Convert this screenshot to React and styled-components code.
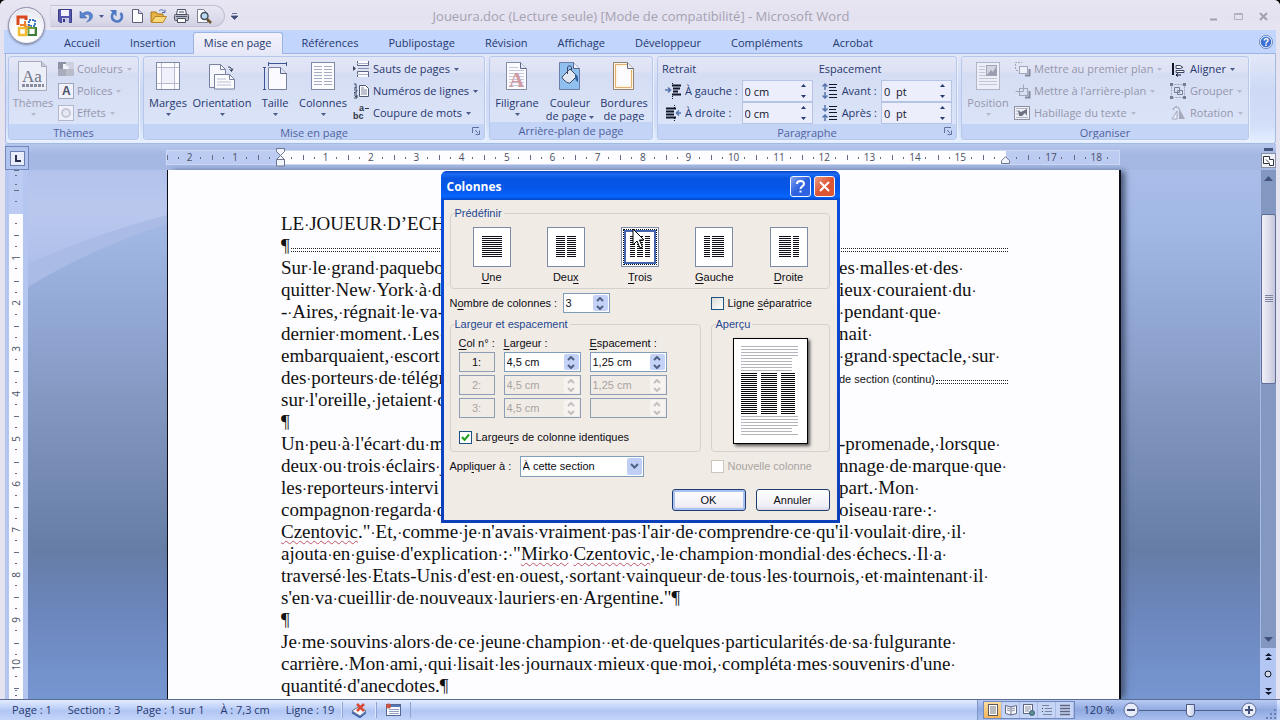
import React, { useState } from "react";
import styled, { createGlobalStyle, css } from "styled-components";

const ui = `"Open Sans", "Noto Sans", sans-serif`;
const dialogFont = `Tahoma, "Liberation Sans", sans-serif`;

const colors = {
  frame: "#e6e3f1",
  text: "#26386f",
  disabled: "#9596ab",
  field: "#7f9db9",
};

const TABS = [
  "Accueil", "Insertion", "Mise en page", "Références", "Publipostage",
  "Révision", "Affichage", "Développeur", "Compléments", "Acrobat",
];

// numbers of the horizontal ruler, -2 to 18 cm around the left margin
const H_CELLS = Array.from({ length: 21 }, (_, i) => i - 2);
const V_CELLS = Array.from({ length: 11 }, (_, i) => i);

// "·" is a space mark, _word_ is a misspelt word
const LINES = [
  { left: "LE·JOUEUR·D’ECH" },
  { left: "¶", fill: true },
  { left: "Sur·le·grand·paquebo", right: "es·malles·et·des·" },
  { left: "quitter·New·York·à·d", right: "ieux·couraient·du·" },
  { left: "-·Aires,·régnait·le·va-", right: "·pendant·que·" },
  { left: "dernier·moment.·Les·", right: "nait·" },
  { left: "embarquaient,·escort", right: "·grand·spectacle,·sur·" },
  { left: "des·porteurs·de·télégr", section: "de section (continu)" },
  { left: "sur·l'oreille,·jetaient·d" },
  { left: "¶" },
  { left: "Un·peu·à·l'écart·du·m", right: "-promenade,·lorsque·" },
  { left: "deux·ou·trois·éclairs·j", right: "nnage·de·marque·que·" },
  { left: "les·reporteurs·intervi", right: "part.·Mon·" },
  { left: "compagnon·regarda·d", right: "oiseau·rare·:·" },
  { left: "_Czentovic_.\"·Et,·comme·je·n'avais·vraiment·pas·l'air·de·comprendre·ce·qu'il·voulait·dire,·il·" },
  { left: "ajouta·en·guise·d'explication·:·\"_Mirko_·_Czentovic_,·le·champion·mondial·des·échecs.·Il·a·" },
  { left: "traversé·les·Etats-Unis·d'est·en·ouest,·sortant·vainqueur·de·tous·les·tournois,·et·maintenant·il·" },
  { left: "s'en·va·cueillir·de·nouveaux·lauriers·en·Argentine.\"¶" },
  { left: "¶" },
  { left: "Je·me·souvins·alors·de·ce·jeune·champion··et·de·quelques·particularités·de·sa·fulgurante·" },
  { left: "carrière.·Mon·ami,·qui·lisait·les·journaux·mieux·que·moi,·compléta·mes·souvenirs·d'une·" },
  { left: "quantité·d'anecdotes.¶" },
];

const PRESETS = [
  { id: "une", label: <><u>U</u>ne</>, cols: [[0, 20]] },
  { id: "deux", label: <>Deu<u>x</u></>, cols: [[0, 9], [11, 9]] },
  { id: "trois", label: <><u>T</u>rois</>, cols: [[0, 5], [7, 6], [15, 5]] },
  { id: "gauche", label: <><u>G</u>auche</>, cols: [[0, 6], [8, 12]] },
  { id: "droite", label: <><u>D</u>roite</>, cols: [[0, 12], [14, 6]] },
];

const Marked = ({ text }) => (
  <span>
    {text.split(/(·|_[^_]+_)/).map((part, i) => {
      if (part === "·") return <SpaceMark key={i}>·</SpaceMark>;
      if (part.startsWith("_")) return <Misspelt key={i}>{part.slice(1, -1)}</Misspelt>;
      return part;
    })}
  </span>
);

// ── Icons ──

const Svg = ({ w = 16, h = w, children, ...rest }) => (
  <svg width={w} height={h} viewBox={`0 0 ${w} ${h}`} fill="none" aria-hidden="true" {...rest}>
    {children}
  </svg>
);

const Caret = ({ color = "#4a5a8c" }) => (
  <Svg w={5} h={3}><path d="M0 0h5L2.500 3z" fill={color} /></Svg>
);

const UpDown = ({ up, color = "#26386f" }) => (
  <Svg w={7} h={4}><path d={up ? "M3.500 0L6 3H1z" : "M1 1h5L3.500 4z"} fill={color} /></Svg>
);

const Chevron = ({ up, color = "#4d6185" }) => (
  <Svg w={8} h={5}><path d={up ? "M1 4l3-3 3 3" : "M1 1l3 3 3-3"} stroke={color} strokeWidth="2" /></Svg>
);

const OfficeLogo = () => (
  <Svg w={24} h={24}>
    <path d="M3 11V3h8v3" stroke="#d9481c" strokeWidth="3" />
    <path d="M5 11h5V7" stroke="#ee8130" strokeWidth="2" />
    <rect x="14" y="6" width="6" height="6" stroke="#3d76c4" strokeWidth="2" strokeDasharray="2 1" />
    <rect x="4" y="14" width="7" height="7" stroke="#f2bd33" strokeWidth="2.500" />
    <rect x="13.500" y="14" width="7" height="7" stroke="#6f9f3f" strokeWidth="2" />
    <path d="M21 13v8h-8" stroke="#3f7d3a" strokeWidth="2" />
    <path d="M9 12.500h7M12 10v6" stroke="#e89a3a" strokeWidth="1" />
  </Svg>
);

const SaveIcon = () => (
  <Svg><path d="M1.500 1.500h13v13H3l-1.500-1.500z" fill="#5457ab" stroke="#3c3d88" />
    <path d="M4 2h8v6H4z" fill="#f3f3fb" /><path d="M5 10h7v5H5z" fill="#c9cbe4" /><path d="M6 11h2v3H6z" fill="#34357e" /></Svg>
);
const UndoIcon = () => (
  <Svg w={14}><path d="M1 2v7h7L5.500 6.500C8 4.500 10.500 5 10.500 8c0 2-1 3.500-3 5C11.500 12 13.500 10 13.500 7c0-4.500-6-5.500-10-2.500z" fill="#5b84cf" stroke="#446db0" strokeWidth=".6" /></Svg>
);
const RedoIcon = () => (
  <Svg w={14}><path d="M4 3.500A5 5 0 1 0 10.500 4" stroke="#5079c4" strokeWidth="2.600" /><path d="M0 1h6.500v6.500z" fill="#5079c4" /></Svg>
);
const NewIcon = () => (
  <Svg w={14} h={16}><path d="M2.500 1.500h6l4 4v9h-10z" fill="#fdfdff" stroke="#5b6078" /><path d="M8.500 1.500v4h4" fill="#cfd5e8" stroke="#5b6078" /></Svg>
);
const OpenIcon = () => (
  <Svg w={17} h={16}><path d="M1 4h5l1.500 2H13v3H5l-3 5H1z" fill="#e8b345" stroke="#a8741c" />
    <path d="M5 8.500h11.500L13 14.500H1.500z" fill="#fbd97a" stroke="#b9852a" /><path d="M9 3c2-2 4-1.500 5 .5m1-2v3h-3" stroke="#4b6db0" /></Svg>
);
const PrintIcon = () => (
  <Svg w={17} h={16}><path d="M4.500 1.500h8l1 5h-10z" fill="#f4f5fb" stroke="#4d5060" /><rect x="1.500" y="6.500" width="14" height="6" rx="1" fill="#b6bac8" stroke="#4d5060" />
    <path d="M4.500 10.500h8v4h-8z" fill="#fff" stroke="#4d5060" /><path d="M6 4h5M3 8.500h11" stroke="#4d5060" /></Svg>
);
const PreviewIcon = () => (
  <Svg w={16}><path d="M1.500 1.500h6l4 4v9h-10z" fill="#fdfdff" stroke="#7d8297" /><circle cx="8.500" cy="8" r="3.500" fill="#b9dcf0" stroke="#49505f" strokeWidth="1.500" /><path d="M11 11l4 4" stroke="#6b5330" strokeWidth="2.500" /></Svg>
);

const ThemesIcon = () => (
  <Svg w={32} h={32}><path d="M1.500 1.500h23l5 5v24h-28z" fill="#eceef8" stroke="#a6a9b9" /><path d="M24.500 1.500v5h5" fill="#c8cad8" stroke="#a6a9b9" />
    <text x="5" y="22" fontSize="17" fontFamily="Liberation Serif, serif" fill="#6f7487">Aa</text>
    <path d="M5 25.500h22" stroke="#888ca0" strokeWidth="3" strokeDasharray="3 1" /></Svg>
);
const ColorsIcon = () => (
  <Svg><path d="M0 1h8v7H0z" fill="#8e92a5" /><path d="M5 3h5v5H5z" fill="#f2f3fb" /><path d="M8 1h8v7h-5V5H8z" fill="#cdd0df" /><path d="M0 8h16v7H0z" fill="#a9adbe" /><path d="M8 8h8v7H8z" fill="#b9bccb" /></Svg>
);
const FontsIcon = () => (
  <Svg><rect x=".5" y=".5" width="15" height="15" fill="#f0f1fa" stroke="#a2a6ba" /><text x="4" y="12" fontSize="12" fontWeight="bold" fontFamily="Liberation Sans, sans-serif" fill="#4c5167">A</text></Svg>
);
const EffectsIcon = () => (
  <Svg><rect x=".5" y=".5" width="15" height="15" fill="#f0f1fa" stroke="#b3b7ca" /><circle cx="8" cy="8" r="4" fill="#e6e8f4" stroke="#c5c8d7" strokeWidth="2" /></Svg>
);
const MarginsIcon = () => (
  <Svg w={26} h={30}><rect x="1.500" y="1.500" width="23" height="27" fill="#fcfcff" stroke="#8089a8" /><path d="M6.500 2v26M19.500 2v26M2 6.500h22M2 22.500h22" stroke="#b4bad0" /><path d="M7 7h12v15H7z" fill="#eff0fa" /></Svg>
);
const OrientationIcon = () => (
  <Svg w={30} h={30}><path d="M2.500 3.500h11l5 5v18h-16z" fill="#f6f6fd" stroke="#7881a0" /><path d="M13.500 3.500v5h5" stroke="#7881a0" />
    <path d="M7.500 13.500h15l5 5v9.500h-20z" fill="#fcfcff" stroke="#7881a0" /><path d="M22.500 13.500v5h5" stroke="#7881a0" />
    <path d="M10 18h9M10 21h14M10 24h14" stroke="#b7bed5" /><path d="M21 6c3-.5 4 2 3.500 4m-2-2l2 2.500 1.500-3" stroke="#35435f" /></Svg>
);
const SizeIcon = () => (
  <Svg w={26} h={30}><path d="M6.500 6.500h12l6 6v16h-18z" fill="#fbfbff" stroke="#7881a0" /><path d="M18.500 6.500v6h6" fill="#dfe3f2" stroke="#5c6684" />
    <path d="M6 2.500h19M6.500 1v4M24.500 1v4M2.500 6v23M1 6.500h3M1 28.500h3" stroke="#3e5694" /></Svg>
);
const ColumnsIcon = () => (
  <Svg w={26} h={30}><rect x="1.500" y="1.500" width="23" height="27" fill="#fcfcff" stroke="#8089a8" />
    {[5, 8, 11, 14, 17, 20, 23].map((y) => <path key={y} d={`M4 ${y}.500h8M14 ${y}.500h8`} stroke="#a4acc6" />)}</Svg>
);
const BreaksIcon = () => (
  <Svg w={17} h={16}><path d="M4.500 0v4.500h11V0M4.500 16v-5.500h11V16" fill="#fafaff" stroke="#5c6684" /><path d="M4 2.500h11M4 13.500h11" stroke="#aab1c8" /><path d="M5 7.500h11" stroke="#8791af" /><path d="M0 5l3 2.500L0 10z" fill="#35435f" /></Svg>
);
const LineNumIcon = () => (
  <Svg w={17} h={16}><path d="M6.500 2.500h6l3 3v8h-9z" fill="#fdfdff" stroke="#4d5670" /><path d="M8 7h6M8 9h6M8 11h6M8 5h3" stroke="#7e869d" />
    <path d="M1 1h2v4M1 5h3M1 7h3v1L1 10h3M1 12h3v3H1M2 13.500h2" stroke="#35435f" /></Svg>
);
const HyphenIcon = () => (
  <Svg w={17} h={20}><text x="6" y="8" fontSize="9" fontWeight="bold" fontFamily="Liberation Sans, sans-serif" fill="#30343f">a</text>
    <text x="0" y="16" fontSize="9" fontWeight="bold" fontFamily="Liberation Sans, sans-serif" fill="#30343f">bc</text><path d="M12 5.500h4" stroke="#30343f" /></Svg>
);
const WatermarkIcon = () => (
  <Svg w={24} h={30}><path d="M1.500 1.500h14l6 6v21h-20z" fill="#fcfbff" stroke="#838ba7" /><path d="M15.500 1.500v6h6" fill="#e6e9f5" stroke="#5c6684" />
    {[6, 9, 12, 15, 18, 21, 24].map((y) => <path key={y} d={`M4 ${y}.500h${y < 8 ? 9 : 15}`} stroke="#c6c9da" />)}
    <text x="4" y="26" fontSize="21" fontWeight="bold" fontFamily="Liberation Serif, serif" fill="#d19aa4">A</text></Svg>
);
const PageColorIcon = () => (
  <Svg w={24} h={30}><path d="M1.500 1.500h14l6 6v21h-20z" fill="#8fc0ef" stroke="#6c7da8" /><path d="M15.500 1.500v6h6" fill="#e9f2fc" stroke="#5c6684" />
    <path d="M4 16l8-8 7 7-7 7c-2 1-8-4-8-6z" fill="#e2e8f2" stroke="#3c4763" /><path d="M9.500 13V7c0-3 4-3 4 0v3" stroke="#3c4763" /><path d="M17 13c3 1 3 3 3 8-2-1-3-3-3-5z" fill="#2f5f9f" /></Svg>
);
const BordersIcon = () => (
  <Svg w={24} h={30}><path d="M1.500 1.500h14l6 6v21h-20z" fill="#fbf5ea" stroke="#96826c" /><path d="M3.500 3.500h12M3.500 3v23.500h16V9" stroke="#e3b071" /><path d="M6 6h8v3h4v15H6z" fill="#fcfbff" /><path d="M15.500 1.500v6h6" fill="#e9ebf5" stroke="#5c6684" /></Svg>
);
const IndentIcon = ({ right }) => (
  <Svg w={16} h={16}>
    <path d={right ? "M1 3.500h10M1 6.500h8M1 9.500h8M1 12.500h10" : "M7 2.500h9M8 5.500h7M8 8.500h5M7 11.500h9"} stroke="#111628" strokeWidth="2" />
    <path d={right ? "M9.500 0v3M9.500 13v3" : "M7.500 0v2M7.500 13v3"} stroke="#111628" strokeDasharray="1 1" />
    <path d={right ? "M16 8h-4m2-2.500L11.500 8l2.500 2.500" : "M0 7h5M3 4.500L5.500 7 3 9.500"} stroke="#5675ad" strokeWidth="1.500" />
  </Svg>
);
const SpacingIcon = ({ after }) => (
  <Svg w={16} h={16}><path d="M7 1.500h8M7 4.500h7M7 7.500h8M7 11.500h8M7 14.500h8" stroke="#111628" />
    <path d={after ? "M3 0v6M.5 3.500L3 6l2.500-2.500M3 16v-6M.5 12.500L3 10l2.500 2.500" : "M3 7V1M.5 3.500L3 1l2.500 2.500M3 9v6M.5 12.500L3 15l2.500-2.500"} stroke="#5675ad" strokeWidth="1.500" /></Svg>
);
const LauncherIcon = () => (
  <Svg w={8} h={8}><path d="M.5 6V.5H7" stroke="#60709c" /><path d="M3 3l3 3M7.500 3.500v4h-4" stroke="#60709c" /></Svg>
);
const PositionIcon = () => (
  <Svg w={26} h={30}><rect x="1.500" y="1.500" width="23" height="27" fill="#eceef8" stroke="#b3b6c7" />
    {[5, 8, 11, 14, 17, 20, 23].map((y) => <path key={y} d={`M4 ${y}.500h${y < 14 ? 6 : 18}`} stroke="#c3c6d4" />)}
    <rect x="11.500" y="4.500" width="10" height="10" fill="#d2d4e1" stroke="#a1a4b6" /><path d="M12 14l4-5 2 2 3-5v8z" fill="#9a9db0" /></Svg>
);
const FrontIcon = ({ back }) => (
  <Svg w={17} h={16}><rect x="5.500" y="5.500" width="8" height="7" fill={back ? "none" : "#eef0f9"} stroke="#a1a5b8" /><path d={back ? "M1.500 8.500h8v-7" : "M1.500 8V1.500H8M4 9.500H1.500"} stroke="#a1a5b8" strokeDasharray={back ? "0" : "2 1"} />
    <path d="M11 14.500h4.500V8" stroke="#85899e" strokeWidth="2" /></Svg>
);
const WrapIcon = () => (
  <Svg w={17} h={16}><rect x=".5" y="1.500" width="15" height="13" fill="#f0f1f8" stroke="#8c90a2" /><path d="M2 3.500h12M2 12.500h12M2 6h2M2 9h2" stroke="#b1b4c3" /><path d="M4 5l3 2 2-1 4-2v7l-2-3-3 3H5z" fill="#6d7182" /></Svg>
);
const AlignIcon = () => (
  <Svg w={17} h={16}><path d="M3 2v12" stroke="#111628" strokeWidth="2" /><path d="M6 4.500h4l3 2-3 1H6zM6 9.500h8v2H6z" fill="#fbfbff" stroke="#3c4763" /><path d="M6 14h5M8 12.500L6 14l2 1.500" stroke="#111628" /></Svg>
);
const GroupIcon = () => (
  <Svg w={17} h={16}><path d="M1.500 1.500h13v13h-13z" stroke="#a1a5b8" strokeDasharray="2 1" /><path d="M4.500 4.500h5v5h-5zM7.500 7.500h5v4h-5z" stroke="#777c93" />
    <path d="M0 0h3v3H0zM13 0h3v3h-3zM0 13h3v3H0zM13 13h3v3h-3z" fill="#777c93" /></Svg>
);
const RotateIcon = () => (
  <Svg w={17} h={16}><path d="M9 14V3l6 11z" fill="#a6aabc" /><path d="M7 14V6l-5 8z" fill="#e9ebf5" stroke="#a6aabc" /><path d="M3 5c1-4 5-4 6-1" stroke="#8c90a4" /></Svg>
);
const HelpIcon = () => (
  <Svg w={14}><circle cx="7" cy="7" r="6" fill="#3c6fd1" stroke="#dfe8fb" strokeWidth="1.500" /><circle cx="7" cy="7" r="6.600" stroke="#4a6fae" strokeWidth=".7" />
    <text x="4" y="11" fontSize="10" fontWeight="bold" fontFamily="Liberation Sans, sans-serif" fill="#fff">?</text></Svg>
);

const Lines = ({ cols }) => (
  <Svg w={20} h={22}>
    {cols.map(([x, w]) => Array.from({ length: 11 }, (_, i) => (
      <path key={`${x}-${i}`} d={`M${x} ${i * 2}.500h${w}`} stroke="#10101c" />
    )))}
  </Svg>
);

const PreviewDrawing = () => (
  <Svg w={58} h={90}>
    {Array.from({ length: 9 }, (_, i) => (
      <path key={i} d={`M0 ${i * 3}.500h${i > 3 ? 51 : 57}`} stroke="#b4b4bc" />
    ))}
    {Array.from({ length: 7 }, (_, i) => (
      <path key={i} d={`M0 ${70 + i * 3}.500h${i > 3 && i < 6 ? 51 : 57}`} stroke="#b4b4bc" />
    ))}
    {Array.from({ length: 21 }, (_, i) => (
      <path key={i} d={`M0 ${27 + i * 2}.500h16M20 ${27 + i * 2}.500h16M40 ${27 + i * 2}.500h14`} stroke="#08080c" />
    ))}
  </Svg>
);

// ── Parts ──

const BigItem = ({ icon, label, width, disabled, caret = true, inlineCaret }) => (
  <BigButton type="button" $width={width} disabled={disabled}>
    <BigIcon>{icon}</BigIcon>
    <span>{label}{inlineCaret && <> <Caret /></>}</span>
    {caret && <Caret color={disabled ? "#b6b9cb" : undefined} />}
  </BigButton>
);

const SmallItem = ({ icon, label, disabled }) => (
  <SmallButton type="button" disabled={disabled}>
    {icon}
    <span>{label}</span>
    <Caret color={disabled ? "#b6b9cb" : undefined} />
  </SmallButton>
);

const RibbonSpin = ({ id, icon, label, value }) => (
  <>
    {icon}
    <label htmlFor={id}>{label}</label>
    <SpinBox>
      <SpinInput id={id} defaultValue={value} />
      <SpinArrows>
        <SpinArrow type="button" aria-label="Augmenter"><UpDown up /></SpinArrow>
        <SpinArrow type="button" aria-label="Diminuer"><UpDown /></SpinArrow>
      </SpinArrows>
    </SpinBox>
  </>
);

const XpSpin = ({ id, label, value, width, disabled }) => (
  <XpBox $width={width} $disabled={disabled}>
    <XpInput id={id} aria-label={label} defaultValue={value} disabled={disabled} />
    <XpArrows $disabled={disabled}>
      <SpinArrow type="button" aria-label="Augmenter" disabled={disabled}><Chevron up color={disabled ? "#c3c0bf" : undefined} /></SpinArrow>
      <SpinArrow type="button" aria-label="Diminuer" disabled={disabled}><Chevron color={disabled ? "#c3c0bf" : undefined} /></SpinArrow>
    </XpArrows>
  </XpBox>
);

const ColumnsDialog = () => {
  const [preset, setPreset] = useState("trois");
  return (
    <Dialog role="dialog" aria-label="Colonnes">
      <DialogTitle>
        <h2>Colonnes</h2>
        <TitleButton type="button" aria-label="Aide" $color="#2f62e0">
          <Svg w={13} h={15}><path d="M3 5c0-4 7-4 7 0 0 2-3.500 2.500-3.500 5M6.500 11.500v2" stroke="#fff" strokeWidth="2" /></Svg>
        </TitleButton>
        <TitleButton type="button" aria-label="Fermer" $color="#dd5634">
          <Svg w={13}><path d="M2 2l9 9M11 2l-9 9" stroke="#fff" strokeWidth="2" /></Svg>
        </TitleButton>
      </DialogTitle>
      <DialogBody>
        <Fieldset>
          <legend>Prédéfinir</legend>
          <Presets>
            {PRESETS.map((p) => (
              <Preset key={p.id} type="button" onClick={() => setPreset(p.id)}>
                <PresetBox $active={preset === p.id}><span><Lines cols={p.cols} /></span></PresetBox>
                <span>{p.label}</span>
              </Preset>
            ))}
          </Presets>
          <Pointer>
            <Svg w={13} h={21}><path d="M1 1v16l4-4 3 7 2.500-1-3-7H12z" fill="#fff" stroke="#000" /></Svg>
          </Pointer>
        </Fieldset>

        <DialogRow>
          <DialogLabel htmlFor="count" $width="113px">N<u>o</u>mbre de colonnes :</DialogLabel>
          <XpSpin id="count" value="3" width="47px" />
          <SideCheck>
            <input type="checkbox" />
            <span>Ligne <u>s</u>éparatrice</span>
          </SideCheck>
        </DialogRow>

        <Split>
          <Fieldset $pad="7px">
            <legend>Largeur et espacement</legend>
            <WidthGrid>
              <span><u>C</u>ol n° :</span>
              <span><u>L</u>argeur :</span>
              <span><u>E</u>spacement :</span>
              {[["4,5 cm", "1,25 cm"], ["4,5 cm", "1,25 cm"], ["4,5 cm", ""]].map(([w, s], i) => (
                <React.Fragment key={i}>
                  <ColNumber $disabled={i > 0}>{i + 1}:</ColNumber>
                  <XpSpin label={`Largeur ${i + 1}`} value={w} width="77px" disabled={i > 0} />
                  <XpSpin label={`Espacement ${i + 1}`} value={s} width="77px" disabled={i > 0} />
                </React.Fragment>
              ))}
            </WidthGrid>
            <SameWidth>
              <input type="checkbox" defaultChecked />
              <span>Largeu<u>r</u>s de colonne identiques</span>
            </SameWidth>
          </Fieldset>
          <Fieldset $pad="7px">
            <legend>Aperçu</legend>
            <PreviewPage><PreviewDrawing /></PreviewPage>
          </Fieldset>
        </Split>

        <DialogRow>
          <DialogLabel htmlFor="apply" $width="70px">Appl<u>i</u>quer à :</DialogLabel>
          <SelectWrap>
            <select id="apply"><option>À cette section</option></select>
            <SelectArrow><Svg w={9} h={6}><path d="M1 1l3.500 3.500L8 1" stroke="#4d6185" strokeWidth="2" /></Svg></SelectArrow>
          </SelectWrap>
          <SideCheck $disabled>
            <input type="checkbox" disabled />
            <span>Nouvelle colonne</span>
          </SideCheck>
        </DialogRow>

        <Actions>
          <XpButton type="button" $default>OK</XpButton>
          <XpButton type="button">Annuler</XpButton>
        </Actions>
      </DialogBody>
    </Dialog>
  );
};

const App = () => {
  const [tab, setTab] = useState("Mise en page");

  return (
    <>
      <GlobalStyle />
      <Window>
        <TitleBar>
          <Quick>
            <Pill>
              <IconButton type="button" aria-label="Enregistrer"><SaveIcon /></IconButton>
              <IconButton type="button" aria-label="Annuler"><UndoIcon /></IconButton>
              <Caret />
              <IconButton type="button" aria-label="Rétablir"><RedoIcon /></IconButton>
              <IconButton type="button" aria-label="Nouveau"><NewIcon /></IconButton>
              <IconButton type="button" aria-label="Ouvrir"><OpenIcon /></IconButton>
              <IconButton type="button" aria-label="Imprimer"><PrintIcon /></IconButton>
              <IconButton type="button" aria-label="Aperçu"><PreviewIcon /></IconButton>
            </Pill>
            <IconButton type="button" aria-label="Personnaliser">
              <Svg w={7} h={7}><path d="M1 .5h5M0 3h7L3.500 6.500z" stroke="#43507a" fill="#43507a" strokeWidth=".8" /></Svg>
            </IconButton>
          </Quick>
          <h1>Joueura.doc (Lecture seule) [Mode de compatibilité] - Microsoft Word</h1>
          <Controls>
            <IconButton type="button" aria-label="Réduire"><Svg w={9} h={9}><path d="M1 7.500h7" stroke="#a3a0af" strokeWidth="2" /></Svg></IconButton>
            <IconButton type="button" aria-label="Agrandir"><Svg w={9} h={9}><path d="M.5 1.500h8v6h-8zM1 2.500h7" stroke="#b3b0be" /></Svg></IconButton>
            <IconButton type="button" aria-label="Fermer"><Svg w={9} h={9}><path d="M1 1l7 7M8 1L1 8" stroke="#a3a0af" strokeWidth="2" /></Svg></IconButton>
          </Controls>
          <Orb type="button" aria-label="Bouton Office"><OfficeLogo /></Orb>
        </TitleBar>

        <TabBar>
          {TABS.map((t) => (
            <Tab key={t} type="button" $active={t === tab} onClick={() => setTab(t)}>{t}</Tab>
          ))}
          <HelpButton type="button" aria-label="Aide"><HelpIcon /></HelpButton>
        </TabBar>

        <Ribbon>
          <Group $width="131px">
            <GroupBody>
              <BigItem icon={<ThemesIcon />} label="Thèmes" width="46px" disabled />
              <SmallCol $indent="2px">
                <SmallItem icon={<ColorsIcon />} label="Couleurs" disabled />
                <SmallItem icon={<FontsIcon />} label="Polices" disabled />
                <SmallItem icon={<EffectsIcon />} label="Effets" disabled />
              </SmallCol>
            </GroupBody>
            <GroupLabel>Thèmes</GroupLabel>
          </Group>

          <Group $width="342px">
            <GroupBody>
              <BigItem icon={<MarginsIcon />} label="Marges" width="46px" />
              <BigItem icon={<OrientationIcon />} label="Orientation" width="62px" />
              <BigItem icon={<SizeIcon />} label="Taille" width="44px" />
              <BigItem icon={<ColumnsIcon />} label="Colonnes" width="52px" />
              <SmallCol $indent="4px">
                <SmallItem icon={<BreaksIcon />} label="Sauts de pages" />
                <SmallItem icon={<LineNumIcon />} label="Numéros de lignes" />
                <SmallItem icon={<HyphenIcon />} label="Coupure de mots" />
              </SmallCol>
            </GroupBody>
            <GroupLabel>Mise en page<Launcher type="button" aria-label="Options"><LauncherIcon /></Launcher></GroupLabel>
          </Group>

          <Group $width="164px">
            <GroupBody>
              <BigItem icon={<WatermarkIcon />} label="Filigrane" width="52px" />
              <BigItem icon={<PageColorIcon />} label={<>Couleur<br />de page</>} width="54px" caret={false} inlineCaret />
              <BigItem icon={<BordersIcon />} label={<>Bordures<br />de page</>} width="54px" caret={false} />
            </GroupBody>
            <GroupLabel>Arrière-plan de page</GroupLabel>
          </Group>

          <Group $width="300px">
            <GroupBody>
              <SpinGrid>
                <strong>Retrait</strong>
                <RibbonSpin id="left" icon={<IndentIcon />} label="À gauche :" value="0 cm" />
                <RibbonSpin id="right" icon={<IndentIcon right />} label="À droite :" value="0 cm" />
              </SpinGrid>
              <Divider />
              <SpinGrid>
                <strong>Espacement</strong>
                <RibbonSpin id="before" icon={<SpacingIcon />} label="Avant :" value="0  pt" />
                <RibbonSpin id="after" icon={<SpacingIcon after />} label="Après :" value="0  pt" />
              </SpinGrid>
            </GroupBody>
            <GroupLabel>Paragraphe<Launcher type="button" aria-label="Options"><LauncherIcon /></Launcher></GroupLabel>
          </Group>

          <Group $width="288px">
            <GroupBody>
              <BigItem icon={<PositionIcon />} label="Position" width="50px" disabled />
              <SmallCol $indent="1px" $width="156px">
                <SmallItem icon={<FrontIcon />} label="Mettre au premier plan" disabled />
                <SmallItem icon={<FrontIcon back />} label="Mettre à l'arrière-plan" disabled />
                <SmallItem icon={<WrapIcon />} label="Habillage du texte" disabled />
              </SmallCol>
              <SmallCol>
                <SmallItem icon={<AlignIcon />} label="Aligner" />
                <SmallItem icon={<GroupIcon />} label="Grouper" disabled />
                <SmallItem icon={<RotateIcon />} label="Rotation" disabled />
              </SmallCol>
            </GroupBody>
            <GroupLabel>Organiser</GroupLabel>
          </Group>
        </Ribbon>

        <RulerRow>
          <Corner type="button" aria-label="Tabulation">
            <Svg w={15}><rect x=".5" y=".5" width="14" height="14" fill="#e9edfb" stroke="#6a7fb0" /><path d="M6 4v6h5" stroke="#26304d" strokeWidth="2" /></Svg>
          </Corner>
          <Ruler>
            {H_CELLS.map((n) => (
              <HCell key={n}>
                {n === 0 && <Margin><Svg w={9} h={19}><path d="M.5.5h8v3l-4 4 4 4v6.500h-8v-6.500l4-4-4-4zM.5 11.500h8" fill="#f3f5fd" stroke="#6d7690" /></Svg></Margin>}
                {n === 16 && <Margin $low><Svg w={9} h={8}><path d="M4.500.7l4 4v2.800h-8V4.700z" fill="#f3f5fd" stroke="#6d7690" /></Svg></Margin>}
                {n !== 0 && n !== 16 && Math.abs(n)}
              </HCell>
            ))}
          </Ruler>
          <RulerEnd>
            <SplitHandle />
            <IconButton type="button" aria-label="Règle">
              <Svg w={15}><rect x=".5" y=".5" width="14" height="14" fill="#eef0f8" stroke="#8a8fa5" /><path d="M2.500 3.500h6v3h4v6h-4v-2h-6zM5 6.500l3 3" fill="#fff" stroke="#30343f" /></Svg>
            </IconButton>
          </RulerEnd>
        </RulerRow>

        <Workspace>
          <VRuler>
            <VCell $grow={80} />
            {V_CELLS.map((n) => <VCell key={n} $grow={181}><span>{n || ""}</span></VCell>)}
            <VCell $grow={45} />
          </VRuler>
          <Swoosh>
            <svg width="100%" height="120" viewBox="0 0 139 120" preserveAspectRatio="none" aria-hidden="true">
              <defs>
                <linearGradient id="fade" x1="0" y1="0" x2="0" y2="1">
                  <stop offset="0" stopColor="#b2c2eb" />
                  <stop offset=".4" stopColor="#bac8ee" />
                  <stop offset="1" stopColor="#aebfe9" />
                </linearGradient>
              </defs>
              <path d="M0 0h139v54Q60 80 0 117z" fill="#aabbe5" />
              <path d="M0 0h139v45Q60 66 0 94z" fill="url(#fade)" />
            </svg>
          </Swoosh>
          <Paper>
            {LINES.map((l, i) => (
              <Line key={i}>
                <Marked text={l.left} />
                {l.fill && <Leader />}
                {l.right && <Marked text={l.right} />}
                {l.section && <Section>{l.section}<Leader /></Section>}
              </Line>
            ))}
          </Paper>
          <Scrollbar>
            <ScrollTrack>
              <IconButton type="button" aria-label="Haut"><Svg w={9} h={5}><path d="M4.500 0L9 5H0z" fill="#43527a" /></Svg></IconButton>
              <Thumb><Svg w={8} h={8}><path d="M0 .5h8M0 2.500h8M0 4.500h8M0 6.500h8" stroke="#7f86a0" /></Svg></Thumb>
              <IconButton type="button" aria-label="Bas"><Svg w={9} h={5}><path d="M0 0h9L4.500 5z" fill="#43527a" /></Svg></IconButton>
            </ScrollTrack>
            <Browse>
              <IconButton type="button" aria-label="Page précédente"><Svg w={7} h={8}><path d="M3.500 0L7 3H0zM3.500 4L7 7H0z" fill="#10182e" /></Svg></IconButton>
              <IconButton type="button" aria-label="Parcourir"><Svg w={8} h={8}><circle cx="4" cy="4" r="3" fill="#d5d9e6" stroke="#10182e" /></Svg></IconButton>
              <IconButton type="button" aria-label="Page suivante"><Svg w={7} h={8}><path d="M0 1h7L3.500 4zM0 5h7L3.500 8z" fill="#10182e" /></Svg></IconButton>
            </Browse>
          </Scrollbar>
        </Workspace>

        <StatusBar>
          <StatusText>
            <span>Page : 1</span>
            <span>Section : 3</span>
            <span>Page : 1 sur 1</span>
            <span>À : 7,3 cm</span>
            <span>Ligne : 19</span>
          </StatusText>
          <StatusCell>
            <Svg><path d="M1 9l6-4 8 4-6 5z" fill="#f6f7fc" stroke="#66708e" /><path d="M1 10.500l8 5 6-5" stroke="#3b62a6" strokeWidth="1.500" /><path d="M6 2l7 7M13 2L6 9" stroke="#d84a36" strokeWidth="2.500" /></Svg>
          </StatusCell>
          <StatusCell>
            <Svg><rect x="1.500" y="2.500" width="14" height="11" fill="#fbfbff" stroke="#546793" /><path d="M2 4h13" stroke="#5578ba" strokeWidth="2" /><path d="M4 7.500h10M4 9.500h10M4 11.500h10" stroke="#92a0c2" /><circle cx="3.500" cy="4" r="2.500" fill="#c9543f" /></Svg>
          </StatusCell>
          <StatusRight>
            <Views>
              <ViewButton type="button" aria-label="Page" $active><Svg w={12}><rect x="1.500" y=".5" width="9" height="11" fill="#fff" stroke="#5c5a5a" /><path d="M3 3h6M3 5h6M3 7h6M3 9h6" stroke="#77757a" /></Svg></ViewButton>
              <ViewButton type="button" aria-label="Lecture"><Svg w={12}><path d="M.5 1.500L6 3l5.500-1.500v8L6 11 .5 9.500zM6 3v8" fill="#fafaff" stroke="#5f6780" /><path d="M2 4l3 1M2 6l3 1M7 5l3-1M7 7l3-1" stroke="#8990a5" /></Svg></ViewButton>
              <ViewButton type="button" aria-label="Web"><Svg w={12}><rect x=".5" y=".5" width="9" height="9" fill="#fafaff" stroke="#5f6780" /><path d="M2 3h6M2 5h6M2 7h4" stroke="#8990a5" /><circle cx="9" cy="9" r="2.500" fill="#5a8f8a" stroke="#42607f" /></Svg></ViewButton>
              <ViewButton type="button" aria-label="Plan"><Svg w={12}><path d="M1 1.500h7M4 4.500h7M4 7.500h7M2 10.500h9" stroke="#7c849c" /><path d="M1 4.500h1M1 7.500h1" stroke="#444" /></Svg></ViewButton>
              <ViewButton type="button" aria-label="Brouillon"><Svg w={12}><path d="M1 1.500h10M1 4.500h10M1 7.500h10M1 10.500h10" stroke="#5f6780" strokeWidth="1.500" /></Svg></ViewButton>
            </Views>
            <ZoomLabel htmlFor="zoom">120 %</ZoomLabel>
            <ZoomButton type="button" aria-label="Zoom arrière"><Svg w={16}><circle cx="8" cy="8" r="7" fill="#e8ecf9" stroke="#5c6a94" /><path d="M4 8h8" stroke="#43507a" strokeWidth="2" /></Svg></ZoomButton>
            <Zoom id="zoom" type="range" min="0" max="200" defaultValue="102" />
            <ZoomButton type="button" aria-label="Zoom avant"><Svg w={16}><circle cx="8" cy="8" r="7" fill="#e8ecf9" stroke="#5c6a94" /><path d="M4 8h8M8 4v8" stroke="#43507a" strokeWidth="2" /></Svg></ZoomButton>
            <Grip><Svg w={12}><path d="M9 1h2v2H9zM5 5h2v2H5zM9 5h2v2H9zM1 9h2v2H1zM5 9h2v2H5zM9 9h2v2H9z" fill="#6d7fae" /></Svg></Grip>
          </StatusRight>
        </StatusBar>

        <Overlay><ColumnsDialog /></Overlay>
      </Window>
    </>
  );
};

// ── Styled ──

const GlobalStyle = createGlobalStyle`
  * { box-sizing: border-box; }
  body { margin: 0; background: #000; overflow: hidden; }
  button { font: inherit; color: inherit; padding: 0; border: 0; background: none; }
  h1, h2 { margin: 0; font-weight: 400; }
  svg { display: block; flex: none; }
`;

const Window = styled.div`
  position: relative;
  display: flex;
  flex-direction: column;
  height: 100vh;
  border-radius: 6px 6px 0 0;
  overflow: hidden;
  background: ${colors.frame};
  color: ${colors.text};
  font: 11px/14px ${ui};
`;

const IconButton = styled.button`
  display: flex;
  align-items: center;
  justify-content: center;
`;

const TitleBar = styled.header`
  position: relative;
  display: flex;
  align-items: center;
  height: 30px;
  padding: 2px 12px 0 50px;
  background: linear-gradient(#e9e6f3, #e4e1f0 60%, #e8e5f3);

  h1 {
    flex: 1;
    text-align: center;
    font-size: 13px;
    color: #a5a2b0;
    white-space: nowrap;
  }
`;

const Quick = styled.div`
  display: flex;
  align-items: center;
  gap: 6px;
  width: 192px;
`;

const Pill = styled.div`
  display: flex;
  align-items: center;
  gap: 6px;
  height: 22px;
  padding: 0 12px 0 6px;
  border: 1px solid #c3c1d2;
  border-left-color: #d8d6e4;
  border-radius: 0 11px 11px 0;
  background: linear-gradient(#e9e8f4, #d3d2e4);
`;

const Controls = styled.div`
  display: flex;
  justify-content: flex-end;
  gap: 16px;
  width: 228px;
`;

const Orb = styled.button`
  position: absolute;
  left: 8px;
  top: 7px;
  z-index: 2;
  display: flex;
  align-items: center;
  justify-content: center;
  width: 37px;
  height: 37px;
  border: 1px solid #8b8fa6;
  border-radius: 50%;
  background: radial-gradient(circle at 50% 75%, #fff 35%, #d9dbe8 100%);
  box-shadow: 0 0 0 1px #f4f4fa inset, 0 1px 2px #7d86a5;
`;

const TabBar = styled.nav`
  display: flex;
  align-items: flex-end;
  height: 24px;
  margin: 0 4px;
  padding-left: 45px;
  background: #c1d5fd;
  border-bottom: 1px solid #9db5e2;
`;

const Tab = styled.button`
  height: 22px;
  margin-bottom: -1px;
  padding: 0 14px 2px;
  border: 1px solid transparent;
  border-bottom: 0;
  border-radius: 3px 3px 0 0;
  ${(p) => p.$active && css`
    padding: 0 10px 2px;
    margin-left: 2px;
    margin-right: 4px;
    background: linear-gradient(#f3f2fb, #e6e8f8);
    border-color: #9db5e2;
  `}
`;

const HelpButton = styled(IconButton)`
  margin: 0 3px 4px auto;
`;

const Ribbon = styled.section`
  display: flex;
  gap: 4px;
  height: 90px;
  margin: 0 4px 0 5px;
  padding: 2px 2px 3px;
  border: 1px solid #a5bae3;
  border-top: 0;
  border-radius: 0 0 3px 3px;
  background: linear-gradient(#e3e8f8, #cdd9f5 40%, #d3dff9 80%, #e4f0ff);
`;

const Group = styled.div`
  display: flex;
  flex-direction: column;
  width: ${(p) => p.$width};
  border: 1px solid #b5c7eb;
  border-radius: 3px;
  background: linear-gradient(#e3e6f6, #dde1f4 18%, #d5ddf4 20%, #dde5f9);
  box-shadow: 1px 1px 0 #edf2fd;
  overflow: hidden;
`;

const GroupBody = styled.div`
  display: flex;
  height: 68px;
  padding: 1px 1px 0;
`;

const GroupLabel = styled.div`
  position: relative;
  flex: 1;
  text-align: center;
  color: #4f639f;
  background: #c4d4f6;
  line-height: 17px;
`;

const Launcher = styled(IconButton)`
  position: absolute;
  right: 4px;
  top: 3px;
`;

const BigButton = styled.button`
  display: flex;
  flex-direction: column;
  align-items: center;
  width: ${(p) => p.$width};
  color: ${(p) => (p.disabled ? colors.disabled : "inherit")};
  line-height: 13px;
  white-space: nowrap;

  & > span + svg { margin-top: 4px; }
  span svg { display: inline-block; vertical-align: middle; }
`;

const BigIcon = styled.div`
  display: flex;
  align-items: center;
  height: 36px;
  margin-bottom: 2px;
`;

const SmallCol = styled.div`
  display: flex;
  flex-direction: column;
  align-items: flex-start;
  margin-left: ${(p) => p.$indent || 0};
  width: ${(p) => p.$width || "auto"};
`;

const SmallButton = styled.button`
  display: flex;
  align-items: center;
  gap: 3px;
  height: 22px;
  white-space: nowrap;
  color: ${(p) => (p.disabled ? colors.disabled : "inherit")};

  span + svg { margin-left: 1px; }
`;

const SpinGrid = styled.div`
  display: grid;
  grid-template-columns: 16px 1fr 71px;
  grid-auto-rows: 22px;
  column-gap: 4px;
  align-items: center;
  padding: 0 3px 0 6px;
  white-space: nowrap;
  flex: 1 1 auto;

  strong { grid-column: 1 / -1; font-weight: 400; margin-left: -3px; }
`;

const SpinBox = styled.div`
  display: flex;
  height: 22px;
  border: 1px solid #b5c4e4;
  background: #edeefb;
`;

const SpinInput = styled.input`
  flex: 1;
  min-width: 0;
  padding: 0 2px;
  border: 0;
  background: none;
  font: 11px ${ui};
  color: #10142a;
  white-space: pre;
`;

const SpinArrows = styled.div`
  display: flex;
  flex-direction: column;
  width: 17px;
`;

const SpinArrow = styled.button`
  flex: 1;
  min-height: 0;
  display: flex;
  align-items: center;
  justify-content: center;
`;

const Divider = styled.div`
  width: 1px;
  margin: 6px 0;
  background: #b1c0e0;
`;

const RulerRow = styled.div`
  display: flex;
  height: 26px;
  margin: 0 4px 0 5px;
  padding-top: 2px;
  background: linear-gradient(#b5c7ec, #a5b8e3 40%);
`;

const Corner = styled(IconButton)`
  width: 24px;
  height: 24px;
  border: 1px solid #7088bd;
  background: #b1c4ee;
`;

const Ruler = styled.div`
  flex: 1;
  display: flex;
  height: 13px;
  margin: 5px 141px 0 138px;
  background: linear-gradient(90deg, #bccbf1 11.9%, #fdfdff 11.9%, #fdfdff 88.1%, #bccbf1 88.1%);
  box-shadow: 0 0 0 1px #cfdaf6;
`;

const HCell = styled.div`
  position: relative;
  flex: 1;
  display: flex;
  justify-content: center;
  font-size: 10px;
  line-height: 12px;
  color: #4b5064;
  background:
    linear-gradient(#666c84, #666c84) 0 50% / 1px 5px no-repeat,
    linear-gradient(#666c84, #666c84) 25% 50% / 1px 2px no-repeat,
    linear-gradient(#666c84, #666c84) 75% 50% / 1px 2px no-repeat;
`;

const Margin = styled.div`
  position: absolute;
  top: ${(p) => (p.$low ? "5px" : "-3px")};
  z-index: 1;
`;

const RulerEnd = styled.div`
  display: flex;
  flex-direction: column;
  align-items: center;
  gap: 2px;
  width: 16px;
`;

const SplitHandle = styled.div`
  width: 9px;
  height: 3px;
  margin-top: 2px;
  background: #47567f;
`;

const Workspace = styled.main`
  flex: 1;
  min-height: 0;
  display: flex;
  margin: 0 4px 0 5px;
  background: linear-gradient(#a9bde9, #a1b7e3 12%, #8ea3cf 32%, #8297bf 45%, #667da6 72%, #6b85ba 82%, #7696d1);
`;

const VRuler = styled.div`
  display: flex;
  flex-direction: column;
  width: 23px;
  border: solid #b4c6ef;
  border-width: 0 5px 0 4px;
  background: linear-gradient(#bccbf1 44px, #fdfdff 44px);
`;

const VCell = styled.div`
  flex: ${(p) => p.$grow} 1 0;
  min-height: 0;
  display: flex;
  align-items: center;
  justify-content: center;
  font-size: 10px;
  line-height: 12px;
  color: #4b5064;
  background:
    linear-gradient(#666c84, #666c84) 50% 0 / 5px 1px no-repeat,
    linear-gradient(#666c84, #666c84) 50% 25% / 2px 1px no-repeat,
    linear-gradient(#666c84, #666c84) 50% 75% / 2px 1px no-repeat;

  span { writing-mode: vertical-rl; transform: rotate(180deg); }
`;

const Swoosh = styled.div`
  width: 139px;
`;

const Paper = styled.article`
  flex: 1;
  min-width: 0;
  margin-right: 139px;
  padding: 43px 111px 0 113px;
  border: solid #0b0e18;
  border-width: 0 2px 0 1px;
  background: #fdfcff;
  box-shadow: 5px 0 6px -1px #4a5878;
  color: #111;
  font: 19px/22px "Liberation Serif", serif;
  white-space: nowrap;
  overflow: hidden;
`;

const Line = styled.div`
  display: flex;
  height: 22px;

  & > span:first-child:not(:only-child):not(:has(+ i)) { flex: 0 0 558px; overflow: hidden; }
`;

const SpaceMark = styled.span`
  font-size: 15px;
`;

const Misspelt = styled.span`
  text-decoration: underline wavy #c0566a 1px;
  text-decoration-skip-ink: none;
  text-underline-offset: 2px;
`;

const Leader = styled.i`
  flex: 1;
  height: 4px;
  margin: 13px 0 0 1px;
  border: dotted #222;
  border-width: 1px 0;
`;

const Section = styled.span`
  flex: 1;
  display: flex;
  font: 11px/24px ${dialogFont};
`;

const Scrollbar = styled.div`
  display: flex;
  flex-direction: column;
  width: 16px;
`;

const ScrollTrack = styled.div`
  flex: 1;
  display: flex;
  flex-direction: column;
  padding: 6px 0 6px;
  background: #8398c0;
  border-left: 1px solid #a8bbe4;

  & > :last-child { margin-top: auto; }
`;

const Thumb = styled.div`
  display: flex;
  align-items: center;
  justify-content: center;
  height: 170px;
  margin-top: 33px;
  border: 1px solid #5f6f97;
  border-radius: 2px;
  background: linear-gradient(90deg, #f0eff9, #dedeec 50%, #c3c5da);
`;

const Browse = styled.div`
  display: flex;
  flex-direction: column;
  justify-content: space-around;
  height: 51px;
  background: #b4c7f4;
`;

const StatusBar = styled.footer`
  display: flex;
  align-items: center;
  height: 21px;
  padding: 0 3px 0 12px;
  border-top: 1px solid #5a6b94;
  background: linear-gradient(#e2eafd, #c9d8fb 30%, #b1c6f3 55%, #c4d5f9);
`;

const StatusText = styled.div`
  display: flex;
  gap: 16px;
  padding-right: 8px;
  white-space: nowrap;
`;

const StatusCell = styled.div`
  padding: 0 9px 0 8px;
  border-left: 1px solid #8ea4d4;
  box-shadow: -1px 0 0 #dbe5fc;
  & + & { border-right: 1px solid #8ea4d4; }
`;

const StatusRight = styled.div`
  display: flex;
  align-items: center;
  height: 20px;
  margin-left: auto;
  padding-left: 5px;
  border-left: 1px solid #7f95c8;
  background: linear-gradient(#b9cbf3, #8fa9e0 50%, #a9bfee);
`;

const Views = styled.div`
  display: flex;
  height: 18px;
  border: 1px solid #7389bd;
  background: #c6d4f5;
`;

const ViewButton = styled(IconButton)`
  width: 18px;
  background: ${(p) => (p.$active ? "linear-gradient(#fbdba0, #f4b558)" : "none")};
  border-right: 1px solid #a9bbe6;
`;

const ZoomLabel = styled.label`
  width: 48px;
  text-align: center;
`;

const ZoomButton = styled(IconButton)`
  width: 16px;
`;

const Zoom = styled.input`
  width: 102px;
  height: 16px;
  margin: 0;
  appearance: none;
  background: linear-gradient(#50608c, #50608c) 50% 50% / 100% 1px no-repeat;

  &::-webkit-slider-thumb {
    appearance: none;
    width: 9px;
    height: 13px;
    border: 1px solid #4e5c85;
    border-radius: 1px 1px 5px 5px;
    background: linear-gradient(90deg, #f8f9fe, #c9d2ea);
  }
`;

const Grip = styled.div`
  align-self: flex-end;
  margin-left: 8px;
`;

const Overlay = styled.div`
  position: absolute;
  inset: 171px 0 auto;
  display: flex;
  justify-content: center;
`;

const Dialog = styled.section`
  width: 399px;
  border-radius: 6px 6px 0 0;
  background: linear-gradient(#0a4ee0, #0d3fbb);
  padding: 0 3px 3px;
  color: #0c0c12;
  font-family: ${dialogFont};

  u { text-underline-offset: 2px; }
`;

const DialogTitle = styled.div`
  display: flex;
  align-items: center;
  gap: 3px;
  height: 29px;
  margin: 0 -3px;
  padding: 2px 5px 0 6px;
  border-radius: 6px 6px 0 0;
  background: linear-gradient(#0a3fc4, #1c6cf5 10%, #0855e2 25%, #0557ea 60%, #0665fc 88%, #0447c8);

  h2 {
    flex: 1;
    font: 700 12px/16px ${ui};
    color: #fff;
  }
`;

const TitleButton = styled(IconButton)`
  width: 21px;
  height: 21px;
  border: 1px solid #f3f5ff;
  border-radius: 3px;
  background: linear-gradient(135deg, #ffffff66, transparent 50%), ${(p) => p.$color};
`;

const DialogBody = styled.div`
  padding: 6px 7px 9px 6px;
  background: #f1ebe6;
`;

const Fieldset = styled.fieldset`
  position: relative;
  min-width: 0;
  margin: 0;
  padding: 7px 8px ${(p) => p.$pad || "4px"};
  border: 1px solid #d5d2cb;
  border-radius: 4px;

  legend {
    margin-left: -4px;
    padding: 0 2px 0 0;
    color: #24478f;
  }
`;

const Presets = styled.div`
  display: flex;
  justify-content: space-between;
  padding: 0 13px 0 14px;
`;

const Preset = styled.button`
  display: flex;
  flex-direction: column;
  align-items: center;
  gap: 3px;
  width: 38px;
`;

const PresetBox = styled.div`
  width: 38px;
  height: 40px;
  padding: 2px;
  border: 1px solid #7b8ba8;
  background: #fff;

  span {
    display: flex;
    align-items: center;
    justify-content: center;
    height: 100%;
    ${(p) => p.$active && css`
      outline: 1px dotted #111;
      border: 2px solid #4166ad;
    `}
  }
`;

const Pointer = styled.div`
  position: absolute;
  left: 181px;
  top: 8px;
`;

const DialogRow = styled.div`
  display: flex;
  align-items: center;
  height: 20px;
  margin-top: 4px;
`;

const DialogLabel = styled.label`
  width: ${(p) => p.$width};
  white-space: nowrap;
`;

const check = css`
  display: flex;
  align-items: center;
  gap: 4px;
  white-space: nowrap;

  input {
    appearance: none;
    width: 13px;
    height: 13px;
    margin: 0;
    border: 1px solid #1c5180;
    background: linear-gradient(135deg, #dcdcd7, #fff);
  }
  input:checked {
    background: url("data:image/svg+xml,%3Csvg xmlns='http://www.w3.org/2000/svg' viewBox='0 0 11 11'%3E%3Cpath d='M2 5l2.500 3L9 2.500' fill='none' stroke='%2321a121' stroke-width='2'/%3E%3C/svg%3E") #fff;
  }
  input:disabled { border-color: #cac8bb; background: #fff; }
`;

const SideCheck = styled.label`
  ${check}
  width: 119px;
  margin-left: auto;
  color: ${(p) => (p.$disabled ? "#a8a4a0" : "inherit")};
`;

const SameWidth = styled.label`
  ${check}
  margin-top: 12px;
`;

const XpBox = styled.div`
  display: flex;
  width: ${(p) => p.$width};
  height: 20px;
  padding: 1px;
  border: 1px solid ${(p) => (p.$disabled ? "#8d9db4" : colors.field)};
  background: ${(p) => (p.$disabled ? "#f1ebe6" : "#fff")};
`;

const XpInput = styled.input`
  flex: 1;
  min-width: 0;
  padding: 0 1px;
  border: 0;
  background: none;
  font: 11px ${dialogFont};
  color: #0c0c12;
  &:disabled { color: #a8a4a0; }
`;

const XpArrows = styled.div`
  display: flex;
  flex-direction: column;
  width: 15px;
  border-radius: 2px;
  background: ${(p) => (p.$disabled ? "#f6f3f1" : "#c5d2f7")};
`;

const Split = styled.div`
  display: grid;
  grid-template-columns: 251px 1fr;
  gap: 10px;
  margin-top: 4px;
`;

const WidthGrid = styled.div`
  display: grid;
  grid-template-columns: 36px 77px 77px;
  gap: 3px 9px;
  white-space: nowrap;

  & > span { line-height: 11px; }
`;

const ColNumber = styled.div`
  display: flex;
  align-items: center;
  justify-content: center;
  border: 1px solid #8d9db4;
  color: ${(p) => (p.$disabled ? "#a8a4a0" : "inherit")};
`;

const PreviewPage = styled.div`
  display: flex;
  align-items: center;
  justify-content: center;
  width: 75px;
  height: 106px;
  margin: 0 auto;
  border: 1px solid #000;
  background: #fff;
  box-shadow: 2px 2px 3px #555;
`;

const SelectWrap = styled.div`
  position: relative;
  width: 124px;

  select {
    appearance: none;
    width: 100%;
    height: 21px;
    padding: 0 2px;
    border: 1px solid ${colors.field};
    background: #fff;
    font: 11px ${dialogFont};
    color: #0c0c12;
  }
`;

const SelectArrow = styled.div`
  position: absolute;
  right: 2px;
  top: 2px;
  display: flex;
  align-items: center;
  justify-content: center;
  width: 15px;
  height: 17px;
  border-radius: 2px;
  background: #c1cff7;
  pointer-events: none;
`;

const Actions = styled.div`
  display: flex;
  justify-content: flex-end;
  gap: 10px;
  margin-top: 13px;
`;

const XpButton = styled.button`
  width: 74px;
  height: 22px;
  border: 1px solid #1f3d70;
  border-radius: 3px;
  background: linear-gradient(#fff, #efeef6 80%, #dbd8e4);
  box-shadow: ${(p) => (p.$default ? "inset 0 0 0 2px #a9c2f2" : "none")};
`;

export default App;
